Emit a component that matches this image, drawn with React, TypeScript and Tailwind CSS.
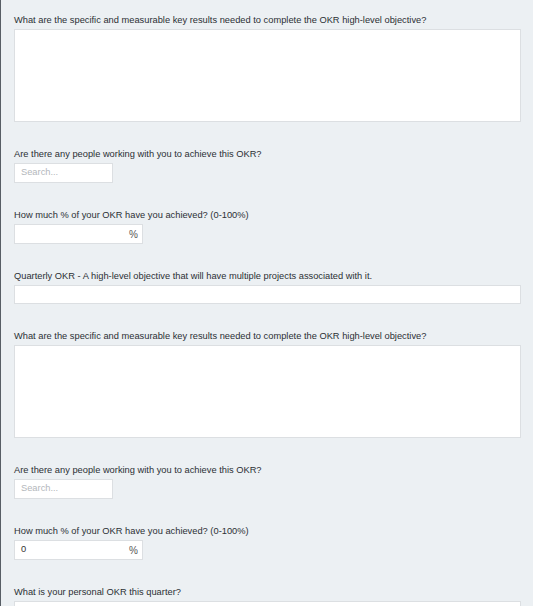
type Field =
  | { kind: "textarea"; label: string }
  | { kind: "text"; label: string }
  | { kind: "search"; label: string }
  | { kind: "percent"; label: string; value?: string }

const fields: Field[] = [
  { kind: "textarea", label: "What are the specific and measurable key results needed to complete the OKR high-level objective?" },
  { kind: "search", label: "Are there any people working with you to achieve this OKR?" },
  { kind: "percent", label: "How much % of your OKR have you achieved? (0-100%)" },
  { kind: "text", label: "Quarterly OKR - A high-level objective that will have multiple projects associated with it." },
  { kind: "textarea", label: "What are the specific and measurable key results needed to complete the OKR high-level objective?" },
  { kind: "search", label: "Are there any people working with you to achieve this OKR?" },
  { kind: "percent", label: "How much % of your OKR have you achieved? (0-100%)", value: "0" },
  { kind: "text", label: "What is your personal OKR this quarter?" },
]

function Box({ f }: { f: Field }) {
  const base = "border border-[#dcdfe2] bg-white"
  if (f.kind === "textarea") return <div className={`${base} h-[93px] w-full`} />
  if (f.kind === "text") return <div className={`${base} h-[19px] w-full`} />
  if (f.kind === "search")
    return (
      <div className={`${base} flex h-[20px] w-[99px] items-center px-[6px] text-[#b3b7bb]`}>Search...</div>
    )
  return (
    <div className={`${base} flex h-[20px] w-[129px] items-center justify-between pl-[6px] pr-[4px] text-[#333]`}>
      <span>{f.value ?? ""}</span>
      <span className="text-[10px] text-[#555]">%</span>
    </div>
  )
}

export default function App() {
  return (
    <div
      className="h-[606px] overflow-hidden border-l border-[#585e65] bg-[#ecf0f3] pl-[13px] pr-[12px] pt-[14px] text-[9.3px] text-[#2b2f33]"
      style={{ fontFamily: '"Liberation Sans", Arial, sans-serif' }}
    >
      {fields.map((f, i) => (
        <div key={i} className="mb-[26px]">
          <p className="mb-[3px] h-[12px] leading-[12px]">{f.label}</p>
          <Box f={f} />
        </div>
      ))}
    </div>
  )
}
